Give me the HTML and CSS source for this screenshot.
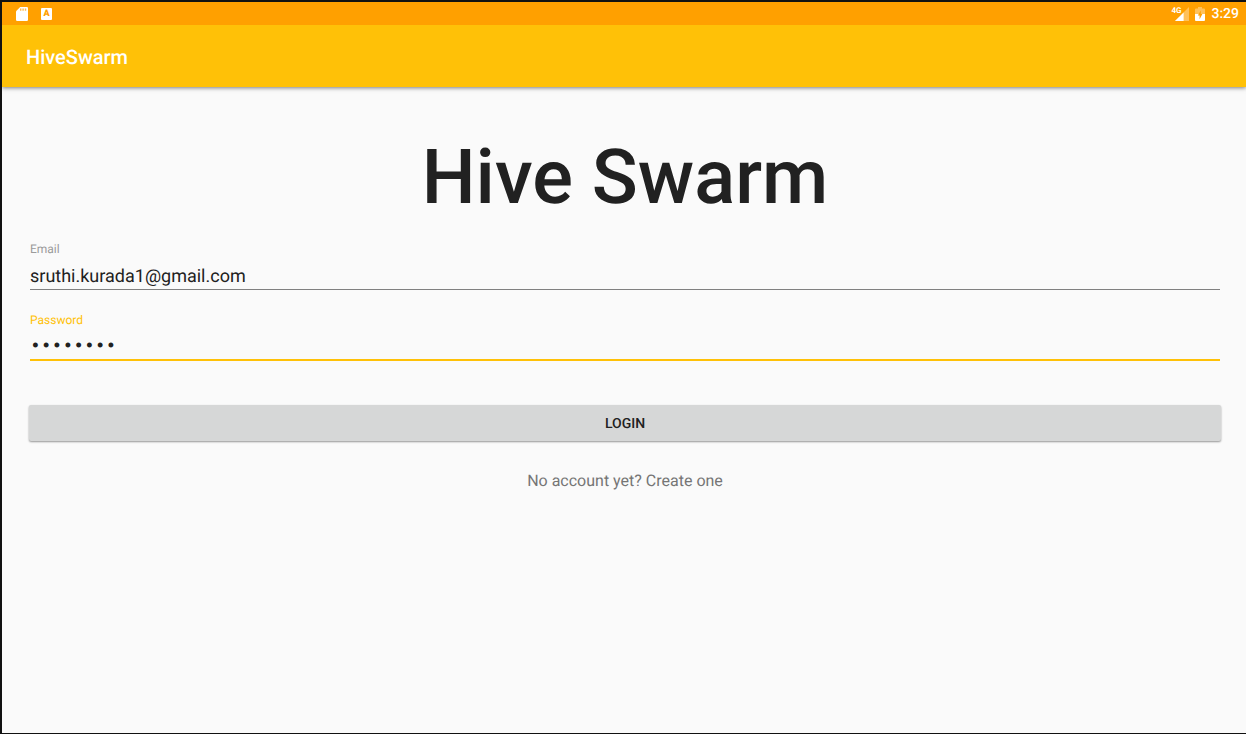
FILE: index.html
```html
<!DOCTYPE html>
<html lang="en">
<head>
<meta charset="utf-8">
<meta name="viewport" content="width=device-width, initial-scale=1">
<title>HiveSwarm</title>
<link rel="stylesheet" href="styles.css">
</head>
<body class="screen">
<div class="status-bar">
  <div class="status-group status-notifications">
    <svg class="icon-card" viewBox="0 0 12 14" aria-hidden="true">
      <path fill="#fff" d="M4.2 0H10.8Q12 0 12 1.2V12.8Q12 14 10.8 14H1.2Q0 14 0 12.8V4.2Z"/>
      <path fill="#ffa000" fill-opacity=".7" d="M4 1.6H5.4V3.8H4ZM6.4 1.6H7.8V3.8H6.4ZM8.8 1.6H10.2V3.8H8.8Z"/>
    </svg>
    <span class="icon-keyboard">A</span>
  </div>
  <div class="status-group status-system">
    <div class="signal">
      <span class="network">4G</span>
      <svg class="icon-signal" viewBox="0 0 14 14" aria-hidden="true">
        <path fill="#fff" fill-opacity=".35" d="M14 0V14H0Z"/>
        <path fill="#fff" d="M8.6 5.4V14H0Z"/>
      </svg>
    </div>
    <svg class="icon-battery" viewBox="0 0 10 14" aria-hidden="true">
      <path fill="#fff" fill-opacity=".35" d="M3 0H7V1.4H9Q10 1.4 10 2.4V7H0V2.4Q0 1.4 1 1.4H3Z"/>
      <path fill="#fff" d="M0 7H10V13Q10 14 9 14H1Q0 14 0 13Z"/>
      <path fill="#ffa000" d="M5.8 3.4 2.8 8.6H4.6V12.2L7.4 7H5.8Z"/>
    </svg>
    <time class="clock">3:29</time>
  </div>
</div>
<header class="app-bar">
  <span class="app-name">HiveSwarm</span>
</header>
<main class="content">
  <h1 class="brand">Hive Swarm</h1>
  <form class="login-form">
    <div class="field">
      <label class="field-label" for="email">Email</label>
      <input class="field-input" id="email" type="email" value="sruthi.kurada1@gmail.com" spellcheck="false">
    </div>
    <div class="field field-active">
      <label class="field-label" for="password">Password</label>
      <input class="field-input field-password" id="password" type="password" value="password">
    </div>
    <button class="login-button" type="button">LOGIN</button>
  </form>
  <a class="signup-link" href="#signup">No account yet? Create one</a>
</main>
</body>
</html>
```
FILE: styles.css
```css
* {
  box-sizing: border-box;
}

.screen {
  display: flex;
  flex-direction: column;
  min-height: 100vh;
  margin: 0;
  border: 0 solid #111;
  border-width: 2px 0 1px 2px;
  background: #fafafa;
  color: #212121;
  font-family: Roboto, sans-serif;
  text-rendering: geometricPrecision;
}

.status-bar {
  position: relative;
  z-index: 1;
  display: flex;
  align-items: center;
  justify-content: space-between;
  height: 23px;
  padding: 0 7px 0 14px;
  background: #ffa000;
  color: #fff;
}

.status-group {
  display: flex;
  align-items: center;
}

.status-notifications {
  gap: 13px;
}

.status-system {
  gap: 6px;
}

.icon-card {
  width: 12px;
  height: 14px;
}

.icon-keyboard {
  width: 11px;
  height: 12px;
  border-radius: 1px;
  background: #fff;
  color: #ffa000;
  font-size: 9px;
  font-weight: 900;
  line-height: 12px;
  text-align: center;
}

.signal {
  display: flex;
  align-items: flex-start;
}

.network {
  margin-right: -6px;
  font-size: 8px;
  font-weight: 700;
  line-height: 8px;
}

.icon-signal {
  width: 14px;
  height: 14px;
}

.icon-battery {
  width: 10px;
  height: 14px;
}

.clock {
  font-size: 14px;
  font-weight: 500;
  line-height: 24px;
}

.app-bar {
  display: flex;
  align-items: center;
  height: 62px;
  padding: 2px 24px 0;
  background: #ffc107;
  box-shadow: 0 1px 4px rgba(0, 0, 0, 0.5);
  color: #fff;
}

.app-name {
  font-size: 20px;
  font-weight: 500;
}

.content {
  display: flex;
  flex-direction: column;
  align-items: center;
  padding: 42px 24px 24px 26px;
}

.brand {
  margin: 0;
  font-size: 76px;
  font-weight: 500;
  line-height: 96px;
}

.login-form {
  display: flex;
  flex-direction: column;
  align-self: stretch;
  padding-top: 16px;
}

.field {
  display: flex;
  flex-direction: column;
  margin: 0 2px 22px;
}

.field-label {
  color: #9b9b9b;
  font-size: 12px;
  line-height: 16px;
}

.field-input {
  width: 100%;
  height: 33px;
  padding: 6px 0 0;
  border: 0;
  border-bottom: 1px solid #808080;
  border-radius: 0;
  outline: 0;
  background: transparent;
  color: #212121;
  font-family: Roboto, sans-serif;
  font-size: 18px;
  text-rendering: inherit;
}

.field-active .field-label {
  color: #ffc107;
}

.field-active .field-input {
  border-bottom: 2px solid #ffc107;
}

.field-password {
  font-family: "Liberation Mono", monospace;
}

.login-button {
  height: 36px;
  margin: 22px 1px 0;
  padding: 2px 0 0;
  border: 0;
  border-radius: 2px;
  background: #d6d7d7;
  box-shadow: 0 1px 2px rgba(0, 0, 0, 0.4);
  color: #212121;
  font-family: Roboto, sans-serif;
  font-size: 14px;
  font-weight: 500;
  text-rendering: inherit;
}

.signup-link {
  margin-top: 28px;
  color: #757575;
  font-size: 16px;
  line-height: 24px;
  text-decoration: none;
}
```
